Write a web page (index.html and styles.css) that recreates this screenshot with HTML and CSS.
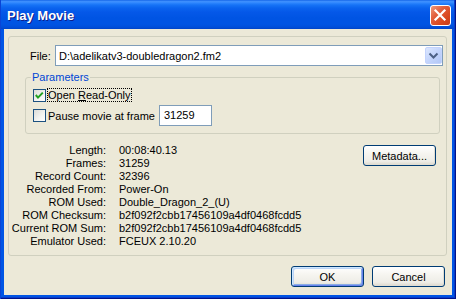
FILE: index.html
```html
<!DOCTYPE html>
<html>
<head>
<meta charset="utf-8">
<title>Play Movie</title>
<link rel="stylesheet" href="styles.css">
</head>
<body>
<div class="window">
  <div class="titlebar">
    <span class="title">Play Movie</span>
    <span class="close"><svg width="19" height="19" viewBox="0 0 19 19"><path d="M4.5 4.5 L13.5 13.5 M13.5 4.5 L4.5 13.5" stroke="#fff" stroke-width="2.2" stroke-linecap="square" fill="none"/></svg></span>
  </div>
  <div class="client">
    <div class="group outer">
      <div class="file-row">
        <span class="file-label">File:</span>
        <div class="combo">
          <span class="combo-text">D:\adelikatv3-doubledragon2.fm2</span>
          <span class="drop"><svg width="15" height="15" viewBox="0 0 15 15"><polyline points="3.5,5.5 7.5,9.5 11.5,5.5" stroke="#4D6185" stroke-width="2" fill="none"/></svg></span>
        </div>
      </div>
      <div class="params">
        <span class="legend">Parameters</span>
        <div class="check-row first">
          <span class="cb"><svg width="11" height="11" viewBox="0 0 11 11"><polyline points="1.8,5 4,7.6 8.8,2.6" stroke="#21A121" stroke-width="2" fill="none"/></svg></span>
          <span class="cb-label focus">Open <u>R</u>ead-Only</span>
        </div>
        <div class="check-row second">
          <span class="cb"></span>
          <span class="cb-label">Pause movie at frame</span>
          <span class="edit">31259</span>
        </div>
      </div>
      <div class="info">
        <dl class="stats">
          <dt>Length:</dt><dd>00:08:40.13</dd>
          <dt>Frames:</dt><dd>31259</dd>
          <dt>Record Count:</dt><dd>32396</dd>
          <dt>Recorded From:</dt><dd>Power-On</dd>
          <dt>ROM Used:</dt><dd>Double_Dragon_2_(U)</dd>
          <dt>ROM Checksum:</dt><dd>b2f092f2cbb17456109a4df0468fcdd5</dd>
          <dt>Current ROM Sum:</dt><dd>b2f092f2cbb17456109a4df0468fcdd5</dd>
          <dt>Emulator Used:</dt><dd>FCEUX 2.10.20</dd>
        </dl>
        <span class="btn meta">Metadata...</span>
      </div>
    </div>
    <div class="actions">
      <span class="btn default">OK</span>
      <span class="btn">Cancel</span>
    </div>
  </div>
</div>
</body>
</html>
```
FILE: styles.css
```css
* { box-sizing: border-box; }
html, body { margin: 0; padding: 0; }
body {
  width: 456px;
  height: 299px;
  overflow: hidden;
  font-family: "Liberation Sans", Arial, sans-serif;
  font-size: 11px;
  color: #000;
  background: #0055E5;
}
.window {
  position: relative;
  width: 456px;
  height: 299px;
  display: flex;
  flex-direction: column;
  background: #0055E5;
}
.window::after {
  content: "";
  position: absolute;
  inset: 0;
  pointer-events: none;
  box-shadow: inset 1px 0 #0A44D6, inset -1px 0 #00138C, inset 0 -1px #00138C, inset -2px 0 #0A3CC8, inset 0 -2px #0A3CC8;
}
.titlebar {
  height: 29px;
  flex: none;
  display: flex;
  align-items: center;
  padding: 0 5px 0 7px;
  background: linear-gradient(to bottom, #0A5CE4 0px, #3C8CFA 1px, #3D90FF 2px, #2C85FD 3px, #1673F6 5px, #0A63EE 8px, #0558E8 12px, #0054E3 18px, #0054E3 24px, #0051DE 26px, #004BD4 28px, #0042C4 29px);
}
.title {
  flex: 1;
  color: #fff;
  font-weight: bold;
  font-size: 13px;
  line-height: 15px;
  margin-top: 2px;
  text-shadow: 1px 1px 0 #0F1E89;
}
.close {
  width: 21px;
  height: 21px;
  margin-top: 1px;
  border: 1px solid #fff;
  border-radius: 3px;
  background: linear-gradient(135deg, #EE9A7C 0%, #E2603E 35%, #D9481F 70%, #C63C19 100%);
  display: flex;
}
.client {
  flex: 1;
  margin: 0 4px 4px 4px;
  background: #ECE9D8;
  padding: 7px 5px 0 4px;
  display: flex;
  flex-direction: column;
}
.group {
  border: 1px solid #D0D0BF;
  border-radius: 3px;
}
.outer {
  height: 220px;
  padding-top: 8px;
}
.file-row {
  display: flex;
  align-items: center;
  height: 21px;
  padding-left: 21px;
}
.file-label { width: 25px; }
.combo {
  width: 388px;
  height: 21px;
  border: 1px solid #7F9DB9;
  background: #fff;
  display: flex;
  align-items: center;
  padding-left: 3px;
}
.combo-text { flex: 1; }
.drop {
  width: 17px;
  height: 17px;
  border: 1px solid #C3D3FD;
  border-radius: 2px;
  background: linear-gradient(135deg, #DCE7FE 0%, #C4D5FC 50%, #B2C7F6 100%);
  display: flex;
}
.params {
  position: relative;
  margin: 11px 0 0 16px;
  width: 415px;
  height: 57px;
  border: 1px solid #D0D0BF;
  border-radius: 3px;
  padding: 10px 0 0 7px;
}
.legend {
  position: absolute;
  left: 5px;
  top: -7px;
  padding: 0 1px;
  line-height: 13px;
  background: #ECE9D8;
  color: #0046D5;
}
.check-row { display: flex; }
.check-row.first { height: 14px; align-items: flex-start; }
.check-row.first .cb { margin-top: 1px; }
.check-row.second { height: 21px; margin-top: 3px; align-items: center; }
.cb {
  width: 13px;
  height: 13px;
  flex: none;
  border: 1px solid #1C5180;
  background: linear-gradient(135deg, #DCDCD7 0%, #F4F4F1 60%, #FFFFFF 100%);
  display: flex;
}
.cb-label {
  margin-left: 1px;
  line-height: 12px;
  border: 1px dotted transparent;
}
.cb-label.focus { border-color: #000; }
.edit {
  margin-left: 3px;
  width: 53px;
  height: 21px;
  border: 1px solid #7F9DB9;
  background: #fff;
  padding-left: 4px;
  line-height: 19px;
}
.info {
  display: flex;
  align-items: flex-start;
  margin-top: 10px;
}
.stats {
  margin: 0;
  display: grid;
  grid-template-columns: 97px auto;
  column-gap: 13px;
  line-height: 13px;
}
.stats dt { text-align: right; }
.stats dd { margin: 0; }
.btn {
  width: 73px;
  height: 21px;
  flex: none;
  display: flex;
  align-items: center;
  justify-content: center;
  border: 1px solid #003C74;
  border-radius: 3px;
  background: linear-gradient(to bottom, #FFFFFF 0%, #F6F5F0 40%, #EEEDE7 80%, #DCD7CC 100%);
  box-shadow: inset -1px -1px 0 #E0DDD2;
}
.meta {
  margin-left: auto;
  margin-right: 10px;
  margin-top: 1px;
}
.actions {
  display: flex;
  justify-content: flex-end;
  gap: 8px;
  margin-top: 10px;
  padding-right: 2px;
}
.btn.default {
  box-shadow: inset 1px 1px 0 #CEE7FF, inset -1px -1px 0 #6982EE, inset 2px 2px 0 #BCD4F6, inset -2px -2px 0 #89ADE4;
}
```
